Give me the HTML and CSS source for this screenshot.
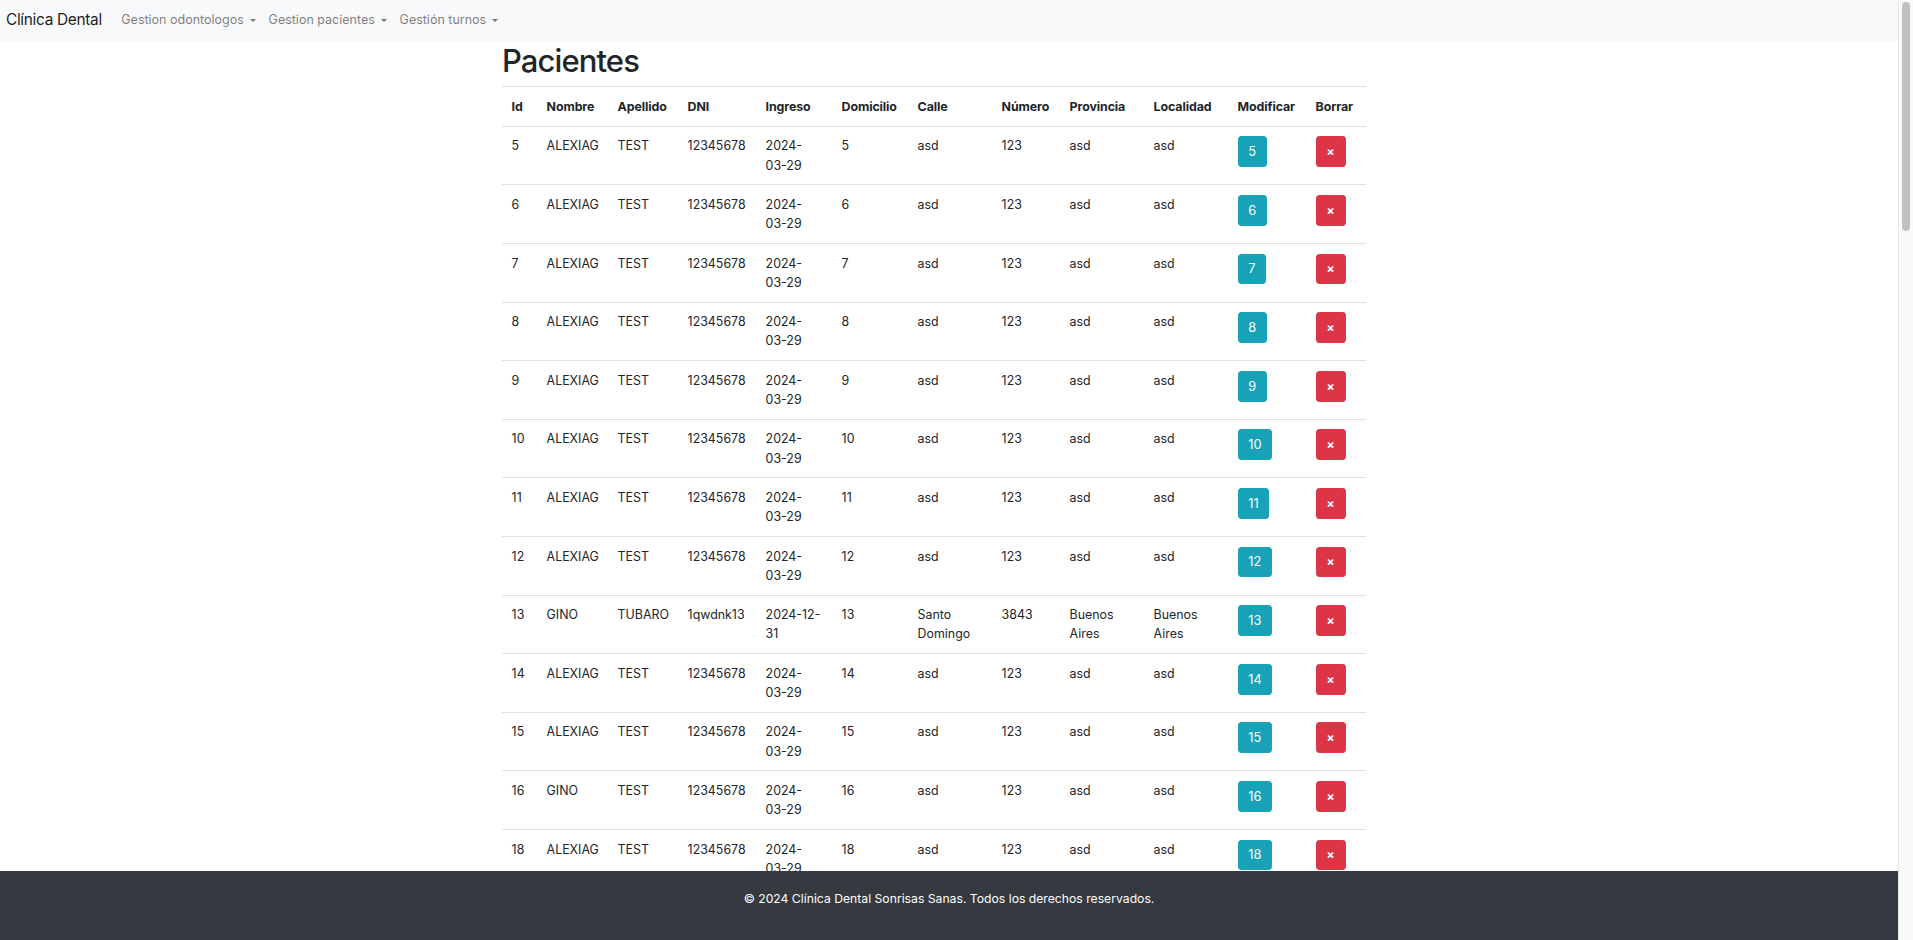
FILE: index.html
```html
<!DOCTYPE html>
<html lang="es">
<head>
<meta charset="utf-8">
<title>Pacientes - Clínica Dental</title>
<link rel="stylesheet" href="styles.css">
</head>
<body>
<div class="viewport">
  <nav class="navbar">
    <a class="brand" href="#">Clínica Dental</a>
    <ul class="nav-links">
      <li><a class="nav-link dropdown-toggle" href="#">Gestion odontologos</a></li>
      <li><a class="nav-link dropdown-toggle" href="#">Gestion pacientes</a></li>
      <li><a class="nav-link dropdown-toggle" href="#">Gestión turnos</a></li>
    </ul>
  </nav>

  <div class="page">
    <main class="content">
      <h1 class="title">Pacientes</h1>
      <table class="table">
        <colgroup>
          <col class="c-id"><col class="c-nombre"><col class="c-apellido"><col class="c-dni">
          <col class="c-ingreso"><col class="c-domicilio"><col class="c-calle"><col class="c-numero">
          <col class="c-provincia"><col class="c-localidad"><col class="c-mod"><col class="c-borrar">
        </colgroup>
        <thead>
          <tr><th>Id</th><th>Nombre</th><th>Apellido</th><th>DNI</th><th>Ingreso</th><th>Domicilio</th><th>Calle</th><th>Número</th><th>Provincia</th><th>Localidad</th><th>Modificar</th><th>Borrar</th></tr>
        </thead>
        <tbody>
          <tr><td>5</td><td>ALEXIAG</td><td>TEST</td><td>12345678</td><td>2024-03-29</td><td>5</td><td>asd</td><td>123</td><td>asd</td><td>asd</td><td><button class="btn btn-info">5</button></td><td><button class="btn btn-danger">×</button></td></tr>
          <tr><td>6</td><td>ALEXIAG</td><td>TEST</td><td>12345678</td><td>2024-03-29</td><td>6</td><td>asd</td><td>123</td><td>asd</td><td>asd</td><td><button class="btn btn-info">6</button></td><td><button class="btn btn-danger">×</button></td></tr>
          <tr><td>7</td><td>ALEXIAG</td><td>TEST</td><td>12345678</td><td>2024-03-29</td><td>7</td><td>asd</td><td>123</td><td>asd</td><td>asd</td><td><button class="btn btn-info">7</button></td><td><button class="btn btn-danger">×</button></td></tr>
          <tr><td>8</td><td>ALEXIAG</td><td>TEST</td><td>12345678</td><td>2024-03-29</td><td>8</td><td>asd</td><td>123</td><td>asd</td><td>asd</td><td><button class="btn btn-info">8</button></td><td><button class="btn btn-danger">×</button></td></tr>
          <tr><td>9</td><td>ALEXIAG</td><td>TEST</td><td>12345678</td><td>2024-03-29</td><td>9</td><td>asd</td><td>123</td><td>asd</td><td>asd</td><td><button class="btn btn-info">9</button></td><td><button class="btn btn-danger">×</button></td></tr>
          <tr><td>10</td><td>ALEXIAG</td><td>TEST</td><td>12345678</td><td>2024-03-29</td><td>10</td><td>asd</td><td>123</td><td>asd</td><td>asd</td><td><button class="btn btn-info">10</button></td><td><button class="btn btn-danger">×</button></td></tr>
          <tr><td>11</td><td>ALEXIAG</td><td>TEST</td><td>12345678</td><td>2024-03-29</td><td>11</td><td>asd</td><td>123</td><td>asd</td><td>asd</td><td><button class="btn btn-info">11</button></td><td><button class="btn btn-danger">×</button></td></tr>
          <tr><td>12</td><td>ALEXIAG</td><td>TEST</td><td>12345678</td><td>2024-03-29</td><td>12</td><td>asd</td><td>123</td><td>asd</td><td>asd</td><td><button class="btn btn-info">12</button></td><td><button class="btn btn-danger">×</button></td></tr>
          <tr><td>13</td><td>GINO</td><td>TUBARO</td><td>1qwdnk13</td><td>2024-12-31</td><td>13</td><td>Santo Domingo</td><td>3843</td><td>Buenos Aires</td><td>Buenos Aires</td><td><button class="btn btn-info">13</button></td><td><button class="btn btn-danger">×</button></td></tr>
          <tr><td>14</td><td>ALEXIAG</td><td>TEST</td><td>12345678</td><td>2024-03-29</td><td>14</td><td>asd</td><td>123</td><td>asd</td><td>asd</td><td><button class="btn btn-info">14</button></td><td><button class="btn btn-danger">×</button></td></tr>
          <tr><td>15</td><td>ALEXIAG</td><td>TEST</td><td>12345678</td><td>2024-03-29</td><td>15</td><td>asd</td><td>123</td><td>asd</td><td>asd</td><td><button class="btn btn-info">15</button></td><td><button class="btn btn-danger">×</button></td></tr>
          <tr><td>16</td><td>GINO</td><td>TEST</td><td>12345678</td><td>2024-03-29</td><td>16</td><td>asd</td><td>123</td><td>asd</td><td>asd</td><td><button class="btn btn-info">16</button></td><td><button class="btn btn-danger">×</button></td></tr>
          <tr><td>18</td><td>ALEXIAG</td><td>TEST</td><td>12345678</td><td>2024-03-29</td><td>18</td><td>asd</td><td>123</td><td>asd</td><td>asd</td><td><button class="btn btn-info">18</button></td><td><button class="btn btn-danger">×</button></td></tr>
        </tbody>
      </table>
    </main>
  </div>

  <footer class="footer">
    <p>© 2024 Clínica Dental Sonrisas Sanas. Todos los derechos reservados.</p>
  </footer>
</div>
<div class="scrollbar"><div class="scrollbar-thumb"></div></div>
</body>
</html>
```

FILE: styles.css
```css
* { box-sizing: border-box; }

html, body {
  margin: 0;
  height: 100%;
}

body {
  display: flex;
  overflow: hidden;
  font-family: Inter, "Noto Sans", sans-serif;
  font-size: 12.8px;
  line-height: 19.2px;
  color: #212529;
  background: #fff;
}

.viewport {
  flex: 1;
  position: relative;
  overflow: hidden;
}

/* Navbar */
.navbar {
  display: flex;
  align-items: center;
  height: 42px;
  padding: 0 6px 2px;
  background: #f8f9fa;
}

.brand {
  font-size: 15.4px;
  line-height: 24px;
  color: rgba(0, 0, 0, 0.9);
  text-decoration: none;
  margin-right: 13px;
  letter-spacing: -0.3px;
}

.nav-links {
  display: flex;
  list-style: none;
  margin: 0;
  padding: 0;
}

.nav-link {
  display: block;
  padding: 0 6.4px;
  color: rgba(0, 0, 0, 0.52);
  text-decoration: none;
  font-size: 12.5px;
}

.dropdown-toggle::after {
  content: "";
  display: inline-block;
  margin-left: 6px;
  vertical-align: 2.5px;
  border-top: 3.6px solid;
  border-left: 3.2px solid transparent;
  border-right: 3.2px solid transparent;
}

/* Page */
.page {
  display: flex;
  justify-content: center;
  padding-right: 30px;
}

.content {
  width: 864px;
}

.title {
  margin: 0 0 6px;
  font-size: 31px;
  line-height: 38.4px;
  font-weight: 500;
  color: #212529;
  letter-spacing: -0.9px;
}

/* Table */
.table {
  width: 864px;
  table-layout: fixed;
  border-collapse: collapse;
}

.c-id { width: 35px; }
.c-nombre { width: 71px; }
.c-apellido { width: 70px; }
.c-dni { width: 78px; }
.c-ingreso { width: 76px; }
.c-domicilio { width: 76px; }
.c-calle { width: 84px; }
.c-numero { width: 68px; }
.c-provincia { width: 84px; }
.c-localidad { width: 84px; }
.c-mod { width: 78px; }
.c-borrar { width: 60px; }

.table th,
.table td {
  padding: 9.6px 9.6px;
  border-top: 1px solid #dee2e6;
  text-align: left;
  vertical-align: top;
  white-space: normal;
}

.table th {
  font-weight: 700;
  font-size: 12.4px;
  letter-spacing: -0.1px;
}

.table thead th {
  border-bottom: 1px solid #dee2e6;
}

.table td {
  font-size: 12.4px;
}

/* Buttons */
.btn {
  display: inline-block;
  font-family: inherit;
  font-size: 12.8px;
  line-height: 19.2px;
  padding: 4.8px 9.6px;
  border: 0.8px solid transparent;
  border-radius: 3.2px;
  color: #fff;
  cursor: pointer;
}

.btn-info {
  background: #17a2b8;
  border-color: #17a2b8;
}

.btn-danger {
  background: #dc3545;
  border-color: #dc3545;
  font-weight: 700;
  font-size: 12px;
  padding-left: 10px;
  padding-right: 10px;
}

/* Footer (fixed over the table) */
.footer {
  position: absolute;
  left: 0;
  right: 0;
  bottom: 0;
  height: 69px;
  padding-top: 18px;
  background: #343a40;
  color: #fff;
  text-align: center;
}

.footer p {
  margin: 0;
  font-size: 12.2px;
  line-height: 19.2px;
}

/* Scrollbar */
.scrollbar {
  width: 15px;
  flex: none;
  background: #fafafa;
  border-left: 1px solid #e6e6e6;
  padding: 2px 3px 0 3px;
}

.scrollbar-thumb {
  height: 229px;
  border-radius: 4px;
  background: #c1c1c1;
}
```
